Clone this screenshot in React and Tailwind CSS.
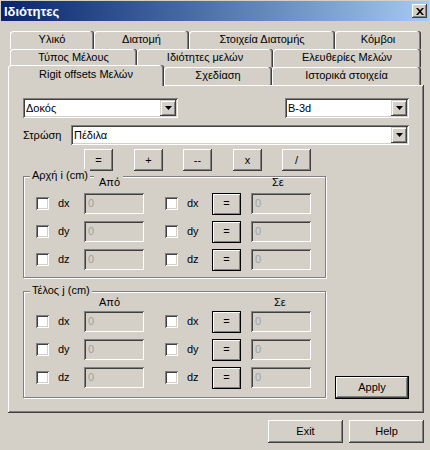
import React from "react";

const RAISED = "shadow-[inset_-1px_-1px_#404040,inset_1px_1px_#ffffff,inset_-2px_-2px_#808080]";
const SUNKEN = "shadow-[inset_1px_1px_#808080,inset_-1px_-1px_#ffffff,inset_2px_2px_#404040,inset_-2px_-2px_#d4d0c8]";

function Tab({ className = "", children }) {
  return (
    <div
      className={
        "flex shrink-0 items-center justify-center rounded-t-[3px] bg-[#d4d0c8] pb-[1px] shadow-[inset_-1px_0_#404040,inset_-2px_0_#808080,inset_1px_1px_#ffffff] " +
        className
      }
    >
      {children}
    </div>
  );
}

function Arrow() {
  return (
    <div className="flex h-[16px] w-[16px] shrink-0 items-center justify-center bg-[#d4d0c8] shadow-[inset_-1px_-1px_#404040,inset_1px_1px_#d4d0c8,inset_2px_2px_#ffffff,inset_-2px_-2px_#808080]">
      <svg width="7" height="4" viewBox="0 0 7 4">
        <path d="M0 0H7L3.5 4Z" fill="#000" />
      </svg>
    </div>
  );
}

function Combo({ className = "", value }) {
  return (
    <div className={"flex h-[20px] bg-white p-[2px] " + SUNKEN + " " + className}>
      <div className="flex-1 pl-[1px] leading-[16px]">{value}</div>
      <Arrow />
    </div>
  );
}

function Btn({ className = "", children }) {
  return (
    <div className={"flex shrink-0 items-center justify-center bg-[#d4d0c8] " + RAISED + " " + className}>
      {children}
    </div>
  );
}

function Check() {
  return <div className={"h-[13px] w-[13px] shrink-0 bg-white " + SUNKEN} />;
}

function Field() {
  return (
    <div className={"flex h-[21px] w-[60px] shrink-0 items-center bg-[#d4d0c8] pl-[4px] text-[#a0a0a0] " + SUNKEN}>
      0
    </div>
  );
}

function EqBtn() {
  return (
    <div className="flex h-[22px] w-[29px] shrink-0 items-center justify-center border border-black bg-[#d4d0c8] shadow-[inset_1px_1px_#ffffff,inset_-1px_-1px_#808080]">
      =
    </div>
  );
}

function Row({ label, className = "" }) {
  return (
    <div className={"flex h-[21px] items-center " + className}>
      <div className="ml-[12px]">
        <Check />
      </div>
      <div className="ml-[9px] w-[26px]">{label}</div>
      <Field />
      <div className="ml-[21px]">
        <Check />
      </div>
      <div className="ml-[9px] w-[25px]">{label}</div>
      <EqBtn />
      <div className="ml-[10px]">
        <Field />
      </div>
    </div>
  );
}

export default function App() {
  return (
    <div className="flex h-[450px] w-[430px] flex-col bg-[#d4d0c8] px-[1px] pt-[1px] font-['Liberation_Sans',Arial,sans-serif] text-[11px] leading-[13px] text-black">
      {/* Title bar */}
      <div className="flex h-[20px] w-full shrink-0 items-center bg-gradient-to-r from-[#0a246a] to-[#a6caf0] pl-[3px] pr-[2px]">
        <div className="text-[13px] font-bold text-white">Ιδιότητες</div>
        <div className={"ml-auto flex h-[14px] w-[15px] items-center justify-center bg-[#d4d0c8] " + "shadow-[inset_-1px_-1px_#404040,inset_1px_1px_#ffffff,inset_-2px_-2px_#808080]"}>
          <svg width="8" height="7" viewBox="0 0 8 7">
            <path d="M0 0h2l2 2.2L6 0h2L5 3.5 8 7H6L4 4.8 2 7H0l3-3.5z" fill="#000" />
          </svg>
        </div>
      </div>

      {/* Tabs + panel */}
      <div className="ml-[7px] mt-[10px] w-[416px]">
        <div className="flex h-[18px] pl-[2px]">
          <Tab className="h-[18px] w-[84px]">Υλικό</Tab>
          <Tab className="h-[18px] w-[95px]">Διατομή</Tab>
          <Tab className="h-[18px] w-[146px]">Στοιχεία Διατομής</Tab>
          <Tab className="h-[18px] w-[86px]">Κόμβοι</Tab>
        </div>
        <div className="flex h-[18px] pl-[2px]">
          <Tab className="h-[18px] w-[127px]">Τύπος Μέλους</Tab>
          <Tab className="h-[18px] w-[136px]">Ιδιότητες μελών</Tab>
          <Tab className="h-[18px] w-[148px]">Ελευθερίες Μελών</Tab>
        </div>
        <div className="relative z-10 flex h-[18px] items-start">
          <Tab className="-mt-[2px] h-[21px] w-[156px] pb-[3px]">Rigit offsets Μελών</Tab>
          <Tab className="h-[18px] w-[108px]">Σχεδίαση</Tab>
          <Tab className="h-[18px] w-[149px]">Ιστορικά στοιχεία</Tab>
        </div>

        {/* Panel */}
        <div className={"flex h-[328px] w-[416px] flex-col px-[15px] pt-[13px] " + RAISED}>
          <div className="flex justify-between">
            <Combo className="w-[155px]" value="Δοκός" />
            <Combo className="w-[124px]" value="B-3d" />
          </div>

          <div className="mt-[7px] flex items-center">
            <div className="w-[48px]">Στρώση</div>
            <Combo className="flex-1" value="Πέδιλα" />
          </div>

          <div className="mt-[4px] flex">
            <Btn className="ml-[61px] h-[22px] w-[29px]">=</Btn>
            <Btn className="ml-[21px] h-[22px] w-[29px]">+</Btn>
            <Btn className="ml-[20px] h-[22px] w-[29px]">--</Btn>
            <Btn className="ml-[21px] h-[22px] w-[29px]">x</Btn>
            <Btn className="ml-[20px] h-[22px] w-[29px]">/</Btn>
          </div>

          {/* Group 1 */}
          <div className="relative mt-[5px] h-[102px] w-[303px] border border-[#808080] shadow-[1px_1px_#ffffff,inset_1px_1px_#ffffff]">
            <div className="absolute -top-[8px] left-[6px] bg-[#d4d0c8] px-[2px]">Αρχή i (cm)</div>
            <div className="-mt-[2px] flex h-[13px]">
              <div className="ml-[70px] w-[29px] bg-[#d4d0c8] pl-[5px] pt-[1px]">Από</div>
              <div className="ml-[149px] pt-[1px]">Σε</div>
            </div>
            <Row label="dx" className="mt-[5px]" />
            <Row label="dy" className="mt-[7px]" />
            <Row label="dz" className="mt-[7px]" />
          </div>

          {/* Group 2 + Apply */}
          <div className="mt-[13px] flex items-end">
            <div className="relative h-[107px] w-[303px] shrink-0 border border-[#808080] shadow-[1px_1px_#ffffff,inset_1px_1px_#ffffff]">
              <div className="absolute -top-[8px] left-[6px] bg-[#d4d0c8] px-[2px]">Τέλος j (cm)</div>
              <div className="mt-[4px] flex h-[13px]">
                <div className="ml-[75px]">Από</div>
                <div className="ml-[154px]">Σε</div>
              </div>
              <Row label="dx" className="mt-[2px]" />
              <Row label="dy" className="mt-[7px]" />
              <Row label="dz" className="mt-[7px]" />
            </div>
            <div className="-mb-[1px] ml-[9px] flex h-[23px] w-[81px] items-center justify-center border border-black bg-[#d4d0c8] shadow-[inset_-1px_-1px_#404040,inset_1px_1px_#ffffff,inset_-2px_-2px_#808080]">
              Apply
            </div>
          </div>
        </div>

        {/* Bottom buttons */}
        <div className="mt-[7px] flex justify-end gap-[6px]">
          <Btn className="h-[23px] w-[75px]">Exit</Btn>
          <Btn className="h-[23px] w-[75px]">Help</Btn>
        </div>
      </div>
    </div>
  );
}
